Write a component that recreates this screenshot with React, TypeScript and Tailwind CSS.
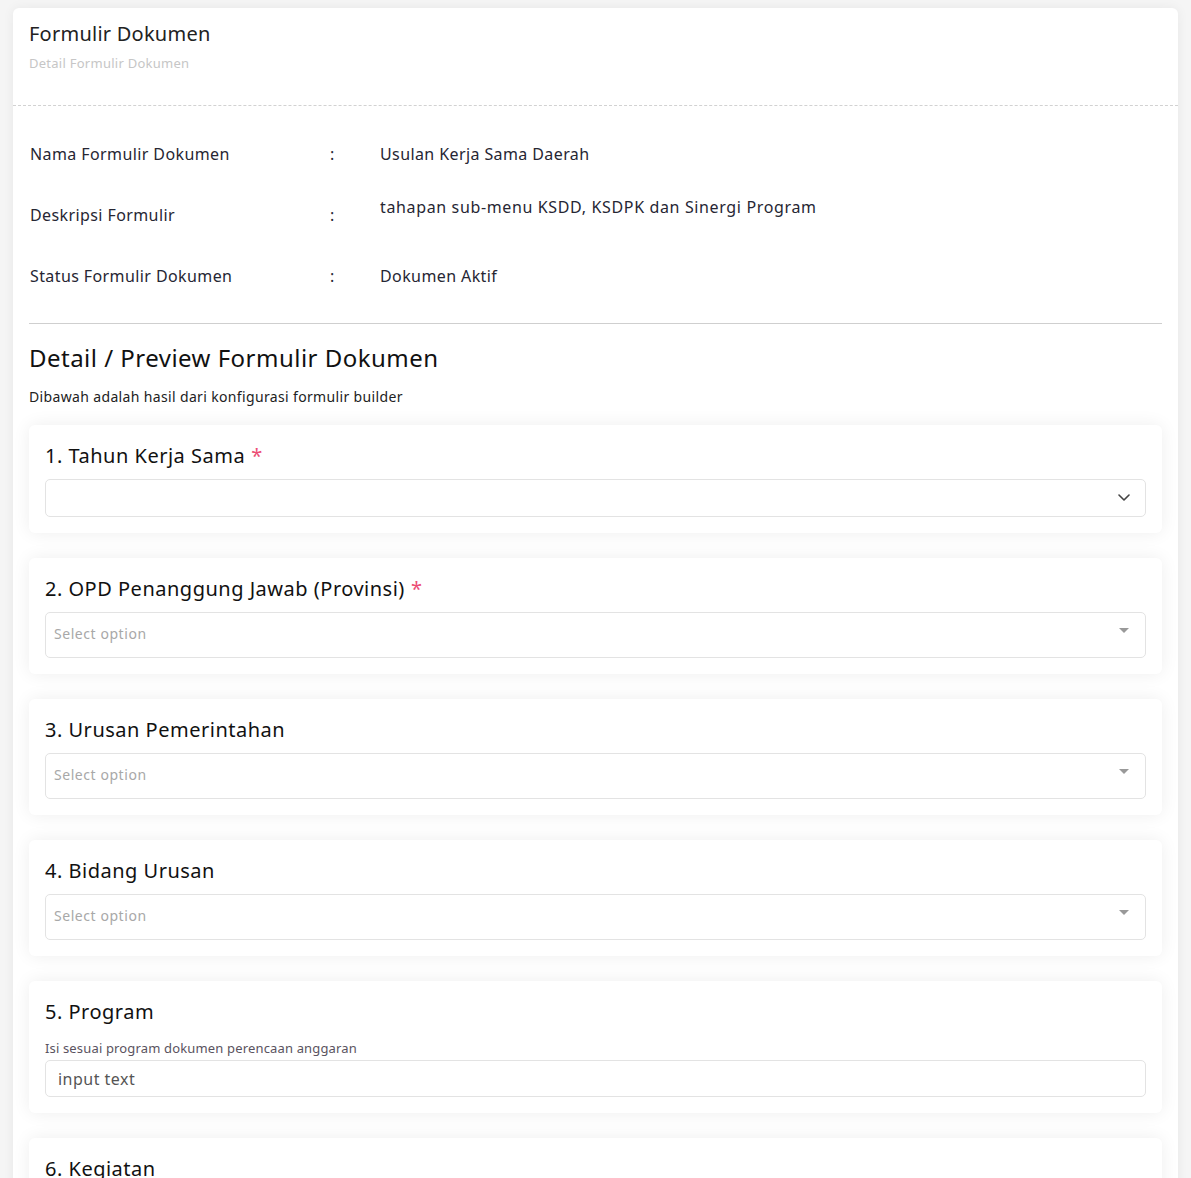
import React from "react";

const font = { fontFamily: '"Noto Sans", "Open Sans", sans-serif' };

function Caret() {
  return (
    <svg width="12" height="7" viewBox="0 0 12 7" className="absolute right-[15px] top-[14px]">
      <path d="M1 1 L6 6 L11 1" fill="none" stroke="#444" strokeWidth="1.6" strokeLinecap="round" strokeLinejoin="round" />
    </svg>
  );
}

function Triangle() {
  return (
    <svg width="10" height="5" viewBox="0 0 10 5" className="absolute right-[16px] top-[15px]">
      <path d="M0 0 L10 0 L5 5 Z" fill="#999" />
    </svg>
  );
}

function FieldCard({ title, required, children }: { title: string; required?: boolean; children: React.ReactNode }) {
  return (
    <div className="bg-white rounded-md shadow-[0_0_18px_rgba(0,0,0,0.07)] px-4 pt-4 pb-4">
      <div className="text-[20px] leading-[30px] tracking-[0.025em] text-[#111]">
        {title}
        {required && <span className="text-[#ec4d75] ml-[6px]">*</span>}
      </div>
      {children}
    </div>
  );
}

function SelectOption() {
  return (
    <div className="relative mt-2 h-[46px] rounded-[5px] border border-[#e3e3e3] bg-white flex items-center px-2">
      <span className="text-[14px] tracking-[0.04em] leading-[20px] -mt-[2px] text-[#a8a8a8]">Select option</span>
      <Triangle />
    </div>
  );
}

export default function App() {
  return (
    <div style={font} className="min-h-[1178px] bg-[#f5f5f5] pt-2 px-[13px]">
      <div className="bg-white rounded-t-md shadow-[0_0_12px_rgba(0,0,0,0.06)]">
        <div className="px-4 pt-[11px] pb-[32px] border-b border-dashed border-[#d2d2d2]">
          <div className="text-[20px] leading-[30px] tracking-[0.012em] text-[#222]">Formulir Dokumen</div>
          <div className="mt-1 text-[13px] leading-[20px] tracking-[0.02em] text-[#c6c6c6]">Detail Formulir Dokumen</div>
        </div>
        <div className="px-4 pt-[17px]">
          <div className="pl-px text-[16px] tracking-[0.025em] text-[#262633]">
            <div className="grid grid-cols-[300px_50px_1fr] h-[61px] items-center">
              <div>Nama Formulir Dokumen</div>
              <div>:</div>
              <div>Usulan Kerja Sama Daerah</div>
            </div>
            <div className="grid grid-cols-[300px_50px_1fr] h-[61px] items-center">
              <div>Deskripsi Formulir</div>
              <div>:</div>
              <div className="mb-4 tracking-[0.04em]">tahapan sub-menu KSDD, KSDPK dan Sinergi Program</div>
            </div>
            <div className="grid grid-cols-[300px_50px_1fr] h-[61px] items-center">
              <div>Status Formulir Dokumen</div>
              <div>:</div>
              <div>Dokumen Aktif</div>
            </div>
          </div>
          <div className="mt-[17px] border-t border-[#cfcfcf]" />
          <div className="mt-4 text-[24px] leading-[36px] tracking-[0.02em] text-[#111]">Detail / Preview Formulir Dokumen</div>
          <div className="mt-[10px] text-[14px] leading-[21px] tracking-[0.025em] text-[#222]">Dibawah adalah hasil dari konfigurasi formulir builder</div>
          <div className="mt-[18px] flex flex-col gap-[25px]">
            <FieldCard title="1. Tahun Kerja Sama" required>
              <div className="relative mt-2 h-[38px] rounded-[5px] border border-[#e3e3e3] bg-white">
                <Caret />
              </div>
            </FieldCard>
            <FieldCard title="2. OPD Penanggung Jawab (Provinsi)" required>
              <SelectOption />
            </FieldCard>
            <FieldCard title="3. Urusan Pemerintahan">
              <SelectOption />
            </FieldCard>
            <FieldCard title="4. Bidang Urusan">
              <SelectOption />
            </FieldCard>
            <FieldCard title="5. Program">
              <div className="mt-3 text-[13px] leading-[18px] tracking-[0.012em] text-[#5a5360]">Isi sesuai program dokumen perencaan anggaran</div>
              <div className="mt-[3px] h-[37px] rounded-[5px] border border-[#e3e3e3] bg-white flex items-center px-3">
                <span className="text-[16px] tracking-[0.03em] text-[#555]">input text</span>
              </div>
            </FieldCard>
            <FieldCard title="6. Kegiatan">
              <SelectOption />
            </FieldCard>
          </div>
        </div>
      </div>
    </div>
  );
}
